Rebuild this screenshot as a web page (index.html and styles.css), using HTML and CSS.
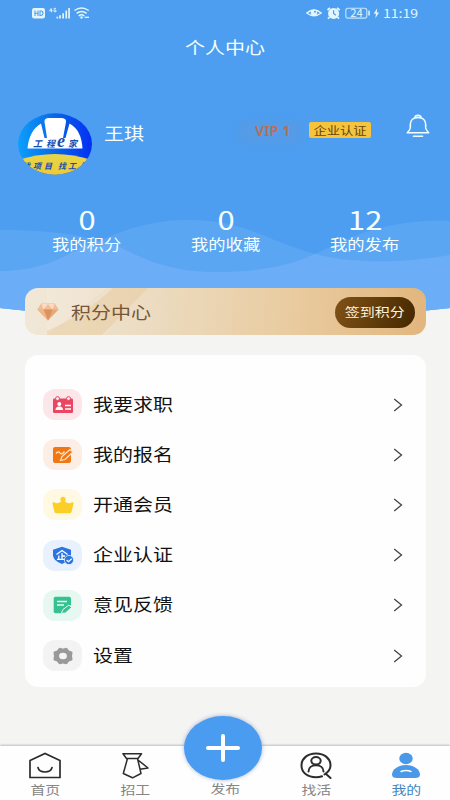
FILE: index.html
```html
<!DOCTYPE html>
<html lang="zh-CN">
<head>
<meta charset="utf-8">
<title>个人中心</title>
<link rel="stylesheet" href="styles.css">
</head>
<body>
<div class="app">
  <svg class="waves" viewBox="0 0 450 320" width="450" height="320">
    <defs><clipPath id="hero"><path d="M0 0H450V308Q225 334 0 308Z"/></clipPath></defs>
    <g clip-path="url(#hero)">
      <rect width="450" height="320" fill="#4d9ef1"/>
      <path d="M0 230C35 230 65 232 92 239C130 248 155 272 215 272C290 272 315 253 345 240C375 226 415 219 450 221V320H0Z" fill="#6aaff5" fill-opacity=".45"/>
      <path d="M0 271C40 271 65 256 92 244C120 231 150 220 188 220C245 220 265 240 315 254C350 263 400 264 450 255V320H0Z" fill="#6aaff5" fill-opacity=".45"/>
      <path d="M0 271C40 271 60 259 78 249Q98 237 118 246C145 260 170 272 215 272C265 272 295 264 315 254C350 263 400 264 450 255V320H0Z" fill="#6eaef6" fill-opacity=".8"/>
    </g>
  </svg>

  <header class="status">
    <div class="status-left">
      <svg width="59" height="14" viewBox="0 0 59 14" fill="#e5f6fb">
        <rect x="0" y="2" width="13" height="10.5" rx="2.2"/>
        <path d="M3 4.5V10M6 4.5V10M3 7.2H6M8 5V9.5H9Q11 9.3 11 7.2T9 5Z" fill="none" stroke="#4d9ef1" stroke-width="1.1"/>
        <path d="M19.5 2 17.4 4.8H20.5M19.6 3V6.3M24 2.4H22.1V5.7H24V4.2H23" fill="none" stroke="#e5f6fb" stroke-width=".9"/>
        <path d="M24.5 10.7h1.7v1.8h-1.7zM27.2 9.3h1.7v3.2h-1.7zM30.3 7.2H32v5.3h-1.7zM33.4 4.6h1.7v7.9h-1.7zM36.2 2h1.7v10.5h-1.7z"/>
        <path d="M42.5 4.5Q49.5-.4 56.7 4.5M44.6 7.4Q49.5 3.6 54.6 7.4M46.7 10Q49.5 7.6 52.3 10" fill="none" stroke="#e5f6fb" stroke-width="1.5"/>
        <circle cx="49.5" cy="11.5" r="1.2"/><path d="M52.5 11.3h4.5" stroke="#e5f6fb" stroke-width="1.3"/>
      </svg>
    </div>
    <div class="status-right">
      <svg width="74" height="14" viewBox="0 0 74 14" fill="#e5f6fb">
        <path d="M.8 7Q8 .8 15.2 7Q8 12.4.8 7Z" fill="none" stroke="#e5f6fb" stroke-width="1.4"/>
        <circle cx="8" cy="6.8" r="3.2"/><circle cx="9" cy="5.7" r="1" fill="#4d9ef1"/>
        <circle cx="27.6" cy="7.4" r="5.5"/><path d="M21.5 4 24 2M31 2l2.7 2M23.7 11.2l-1.8 1.5M31.3 11.2l1.8 1.5" stroke="#e5f6fb" stroke-width="1.7"/>
        <path d="M27.6 4.2V7.4L30 9.2" fill="none" stroke="#4d9ef1" stroke-width="1.2"/>
        <rect x="39.8" y="2.2" width="21" height="9.9" rx="2.2" fill="none" stroke="#c5e6fa" stroke-width="1.1"/>
        <rect x="62.3" y="4.5" width="1.5" height="5" rx=".5"/>
        <path d="M71.2 2.3 67.7 7.8H70L69.3 12.3 73 6.5H70.8Z"/>
        <text x="44.3" y="10.7" font-size="10" textLength="12.5" lengthAdjust="spacingAndGlyphs">24</text>
      </svg>
      <span class="clock"><span class="wide-left">11:19</span></span>
    </div>
  </header>

  <h1 class="title"><span class="wide">个人中心</span></h1>

  <section class="profile">
    <svg class="avatar" viewBox="0 0 74 62" width="74" height="62">
      <defs>
        <linearGradient id="av"><stop offset="0" stop-color="#0ba0fb"/><stop offset=".5" stop-color="#0966e8"/><stop offset="1" stop-color="#0330f3"/></linearGradient>
        <linearGradient id="sand" x2="0" y2="1"><stop stop-color="#e6d64a"/><stop offset="1" stop-color="#f1c934"/></linearGradient>
        <clipPath id="face"><ellipse cx="37" cy="31" rx="37" ry="30.7"/></clipPath>
      </defs>
      <g clip-path="url(#face)">
        <rect width="74" height="62" fill="url(#av)"/>
        <path d="M0 47Q37 35 74 47V62H0Z" fill="url(#sand)"/>
        <path d="M9.5 35.5C10.5 24 15 15 23 10.5L26.5 25H29L26.5 9Q26 5.5 30 5H44Q48.5 5.5 48 9L45 25H47.5L51.5 10.5C60 15 64 24 64.5 35.5Z" fill="#fff"/>
        <g fill="#174cb0" font-weight="bold" font-style="italic">
          <text x="15" y="33.5" font-size="9">工</text><text x="28" y="33.5" font-size="9">程</text>
          <text x="39" y="34" font-size="18" font-family="Liberation Serif, serif">e</text><text x="50" y="33.5" font-size="9">家</text>
          <text x="4" y="55.5" font-size="8">找</text><text x="15" y="55.5" font-size="8">项</text><text x="26" y="55.5" font-size="8">目</text>
          <text x="40" y="55.5" font-size="8">找</text><text x="50" y="55.5" font-size="8">工</text><text x="60" y="55.5" font-size="8">人</text>
        </g>
      </g>
    </svg>
    <div class="name"><span class="wide-left">王琪</span></div>
    <div class="vip"><span class="vip-text">VIP 1</span></div>
    <div class="cert"><span class="wide">企业认证</span></div>
    <svg class="bell" width="24" height="25" viewBox="0 0 24 25" fill="none" stroke="#f3ffff" stroke-width="1.6" stroke-linecap="round" stroke-linejoin="round">
      <path d="M9 3.3Q9.2 1.3 12 1.3T15 3.3M4.3 14V10.5C4.3 6 7.5 3.4 12 3.4S19.7 6 19.7 10.5V13M4.3 14Q4 16 1.3 18.8H22.7Q20 16 19.7 14M7.5 22.3H16.5"/>
    </svg>
  </section>

  <section class="stats">
    <div class="stat"><b><span class="wide">0</span></b><span class="wide">我的积分</span></div>
    <div class="stat"><b><span class="wide">0</span></b><span class="wide">我的收藏</span></div>
    <div class="stat"><b><span class="wide">12</span></b><span class="wide">我的发布</span></div>
  </section>

  <section class="points">
    <svg class="shine" viewBox="0 0 401 47" width="401" height="47">
      <path d="M22 0H82L22 47Z" fill="#fff" opacity=".13"/>
      <path d="M88 0H123L77 47H22V43Q62 25 88 0Z" fill="#e4bd82" opacity=".3"/>
    </svg>
    <svg class="gem" width="22" height="18" viewBox="0 0 22 18">
      <path d="M4.500.5H17.500L21.500 6.500 11 17.500.5 6.500Z" fill="#e7a878"/>
      <path d="M4.500.5H17.500L21.500 6.500H.5Z" fill="#f1bd98"/><path d="M4.500.5 6.500 6.500 11 1 15.500 6.500 17.500.5Z" fill="#fbdcc4"/>
      <path d="M6.500 6.500H15.500L11 17.500Z" fill="#dc925d"/><path d="M.5 6.500H6.500L11 17.500Z" fill="#efb58b"/>
    </svg>
    <div class="points-name"><span class="wide-left">积分中心</span></div>
    <div class="sign"><span class="wide">签到积分</span></div>
  </section>

  <main class="menu">
    <div class="row">
      <div class="tile red"><svg width="22" height="18" viewBox="0 0 22 18"><rect x="1" y="2.5" width="20" height="14.5" rx="1.2" fill="#ec4561"/><g fill="#fce6ea" stroke="#ec4561"><circle cx="5.5" cy="2.6" r="2"/><circle cx="16.5" cy="2.6" r="2"/></g><circle cx="7.3" cy="8" r="2" fill="#fff"/><path d="M3.5 14Q3.5 11.2 6.3 10.6H8.3Q11 11.2 11 14Z" fill="#fff"/><path d="M13 9.5H19M13 13H19" stroke="#fff" stroke-width="1.3"/></svg></div>
      <div class="label"><span class="wide-left">我要求职</span></div><svg class="arrow" width="10" height="16" viewBox="0 0 10 16"><path d="M1.2 2 8.5 8 1.2 14"/></svg>
    </div>
    <div class="row">
      <div class="tile orange"><svg width="22" height="18" viewBox="0 0 22 18"><rect x="1" y="1" width="18" height="16" rx="2" fill="#f17614"/><path d="M4 7.5Q6.5 4.5 8 7T12.5 5.5" fill="none" stroke="#ffe7cf" stroke-width="1.3"/><path d="M8.5 14.5 10 10.5 18 3.5 21 6 13 13.5Z" fill="#f17614" stroke="#ffe7cf" stroke-width="1.2"/></svg></div>
      <div class="label"><span class="wide-left">我的报名</span></div><svg class="arrow" width="10" height="16" viewBox="0 0 10 16"><path d="M1.2 2 8.5 8 1.2 14"/></svg>
    </div>
    <div class="row">
      <div class="tile yellow"><svg width="22" height="18" viewBox="0 0 22 18" fill="#fbcf27"><circle cx="11" cy="3.3" r="2.6"/><path d="M2 6.3Q5 8 7.500 6.500Q9.500 5.500 10 4H12Q12.500 5.500 14.500 6.500Q17 8 20 6.300Q22 6 21.500 7.500L19.500 16Q19 17.300 17.500 17.300H4.500Q3 17.300 2.500 16L.5 7.500Q0 6 2 6.300Z"/></svg></div>
      <div class="label"><span class="wide-left">开通会员</span></div><svg class="arrow" width="10" height="16" viewBox="0 0 10 16"><path d="M1.2 2 8.5 8 1.2 14"/></svg>
    </div>
    <div class="row">
      <div class="tile blue"><svg width="22" height="19" viewBox="0 0 22 19"><path d="M10 .7 19 3.700V9.500Q18 15 10 18Q1.500 15 1 9.500V3.700Z" fill="#2c74df"/><path d="M4.500 8.500 10 4.500 15.500 8.500M10 7V13M6.800 9.500V13M10 10H13M5 13.300H15" fill="none" stroke="#fff" stroke-width="1.3"/><circle cx="17" cy="14" r="4.6" fill="#2c74df" stroke="#e8f1fd" stroke-width=".8"/><path d="M14.600 14 16.500 15.700 19.700 12.700" fill="none" stroke="#fff" stroke-width="1.2"/></svg></div>
      <div class="label"><span class="wide-left">企业认证</span></div><svg class="arrow" width="10" height="16" viewBox="0 0 10 16"><path d="M1.2 2 8.5 8 1.2 14"/></svg>
    </div>
    <div class="row">
      <div class="tile green"><svg width="22" height="18" viewBox="0 0 22 18"><path d="M3.500.7H17Q19 .7 19 2.700V9L10 17.300H3.500Q1.700 17.300 1.700 15.500V2.500Q1.700.7 3.500.7Z" fill="#34c291"/><path d="M5 5.500H15M5 9H12" stroke="#e8faf3" stroke-width="1.3"/><path d="M9.300 17.300 11 13.500 17 9 19.500 11.500 13.500 17Z" fill="#34c291" stroke="#e8faf3"/></svg></div>
      <div class="label"><span class="wide-left">意见反馈</span></div><svg class="arrow" width="10" height="16" viewBox="0 0 10 16"><path d="M1.2 2 8.5 8 1.2 14"/></svg>
    </div>
    <div class="row">
      <div class="tile gray"><svg width="22" height="18" viewBox="0 0 22 18"><path d="M6.500 1.500Q8 .2 9 1Q11 2 13 1Q14 .2 15.500 1.500Q16.500 4 19 4.200Q20.800 4.500 20.500 6Q19.500 9 20.500 12Q20.800 13.500 19 13.800Q16.500 14 15.500 16.500Q14 17.800 13 17Q11 16 9 17Q8 17.800 6.500 16.500Q5.500 14 3 13.800Q1.200 13.500 1.500 12Q2.500 9 1.500 6Q1.200 4.500 3 4.200Q5.500 4 6.500 1.500Z" fill="#999"/><ellipse cx="11" cy="9" rx="3.9" ry="3.3" fill="#f4f4f4"/></svg></div>
      <div class="label"><span class="wide-left">设置</span></div><svg class="arrow" width="10" height="16" viewBox="0 0 10 16"><path d="M1.2 2 8.5 8 1.2 14"/></svg>
    </div>
  </main>

  <nav class="tabs">
    <div class="tab"><svg width="34" height="28" viewBox="0 0 34 28" fill="none" stroke="#2c2c2c" stroke-width="1.7"><path d="M2 25.500V8.500L17 1.500 32 8.500V25.500Z"/><path d="M10 15.500Q11 20 17 20T24 15.500" stroke-linecap="round"/></svg><span class="wide">首页</span></div>
    <div class="tab"><svg width="34" height="28" viewBox="0 0 34 28" fill="none" stroke="#2c2c2c" stroke-width="1.5" stroke-linejoin="round"><path d="M5 1.700H23.500L20 6.500H8.500ZM9.500 6.500 5.300 21.500 14.500 25.800 23 21.500 19.500 6.500M20 8 30 16 22 17.200"/></svg><span class="wide">招工</span></div>
    <div class="tab publish"><div class="fab"><svg width="34" height="28" viewBox="0 0 34 28"><path d="M2 14H32M17 2V26" stroke="#fff" stroke-width="4" stroke-linecap="round"/></svg></div><span class="wide">发布</span></div>
    <div class="tab shifted"><svg width="34" height="28" viewBox="0 0 34 28" fill="none" stroke="#2c2c2c" stroke-width="2" stroke-linecap="round"><path d="M25.500 22.500Q31.500 18.500 31.500 13.500C31.500 6.500 25.500 1.500 17 1.500S2.500 6.500 2.500 13.500 8.500 25.300 17 25.300Q20.500 25.300 23 24.300M26.500 21.500 31.500 26"/><ellipse cx="17" cy="8.8" rx="4.7" ry="3.7"/><path d="M9.500 19.500C9.500 11 24.500 11 24.500 19.500"/></svg><span class="wide">找活</span></div>
    <div class="tab shifted active"><svg width="34" height="28" viewBox="0 0 34 28" fill="#4a98e8"><ellipse cx="17" cy="6.5" rx="6.7" ry="5.8"/><path d="M17 13C25 13 31 17.500 31 22.500Q31 26 26 26H8Q3 26 3 22.500C3 17.500 9 13 17 13Z"/><path d="M12 19.500Q17 17.500 22 19.500" stroke="#fff" stroke-width="1.5" fill="none" stroke-linecap="round"/></svg><span class="wide">我的</span></div>
  </nav>
</div>
</body>
</html>
```
FILE: styles.css
```css
* { box-sizing: border-box; }
body {
  margin: 0;
  background: #f4f4f3;
  font-family: "Noto Sans CJK SC", sans-serif;
  overflow: hidden;
}
svg { display: block; flex: none; }
.app {
  position: relative;
  width: 450px;
  height: 800px;
  display: flex;
  flex-direction: column;
}
.app > * { position: relative; flex: none; }
.app > .waves { position: absolute; top: 0; left: 0; }

/* Expanded letterforms */
.wide, .wide-left { display: inline-block; white-space: nowrap; transform: scaleX(1.21); }
.wide-left { transform-origin: left center; }

.status {
  height: 26px;
  padding: 0 32px;
  display: flex;
  justify-content: space-between;
  align-items: center;
  color: #e5f6fb;
}
.status-right { display: flex; align-items: center; gap: 3px; }
.clock { font-size: 12px; line-height: 14px; width: 35px; white-space: nowrap; }
.clock .wide-left { transform: scaleX(1.17); }
.title {
  margin: 0;
  height: 44px;
  line-height: 43px;
  text-align: center;
  font-size: 16.5px;
  font-weight: 400;
  color: #f5ffff;
}
.profile {
  height: 104px;
  margin-top: 26px;
  padding: 17px 20px 0 18px;
  display: flex;
  align-items: flex-start;
}
.name { width: 147px; padding-left: 12px; margin-top: 7px; font-size: 16.5px; line-height: 26px; color: #f5ffff; }
.vip {
  width: 54px;
  height: 14px;
  margin: 12px 0 0 4px;
  padding-left: 12px;
  line-height: 14px;
  white-space: nowrap;
  background: rgba(125, 145, 185, 0.2);
  box-shadow: 0 0 7px 4px rgba(125, 145, 185, 0.2);
}
.vip-text {
  display: block;
  width: 32px;
  margin-top: -1px;
  font-family: "Noto Sans", sans-serif;
  font-size: 13.5px;
  font-weight: 600;
  color: #b66f55;
  transform: scaleX(1.08);
  transform-origin: left center;
}
.cert {
  width: 62px;
  height: 16px;
  margin: 9px 0 0 12px;
  border-radius: 2px;
  background: #f5c43d;
  color: #67450d;
  text-align: center;
  font-size: 11px;
  line-height: 16px;
}
.bell { margin: 1px 0 0 auto; }
.stats {
  height: 88px;
  padding: 4px 17px 0;
  display: grid;
  grid-template-columns: repeat(3, 139px);
}
.stat { text-align: center; font-size: 14.3px; line-height: 22px; color: #f5ffff; }
.stat b { display: block; padding-left: 1px; font-size: 25.5px; font-weight: 400; line-height: 30px; }
.stat > .wide { position: relative; top: -1px; }
.points {
  width: 401px;
  height: 47px;
  margin-left: 25px;
  padding: 0 11px 0 12px;
  border-radius: 13px;
  overflow: hidden;
  display: flex;
  align-items: center;
  background: linear-gradient(95deg, #f1e8d8 0%, #ecdcc2 30%, #e9cca1 65%, #e2b67d 100%);
}
.shine { position: absolute; left: 0; top: 0; }
.gem, .points-name, .sign { position: relative; }
.points-name { flex: 1; margin-left: 12px; font-size: 16.5px; color: #765638; }
.sign {
  width: 80px;
  height: 31px;
  margin-top: 2px;
  border-radius: 16px;
  background: linear-gradient(110deg, #805217, #452800);
  color: #fff3dd;
  text-align: center;
  font-size: 12.4px;
  line-height: 30px;
}
.menu {
  width: 401px;
  height: 332px;
  margin: 20px 0 0 25px;
  padding: 24.5px 23px 0 18px;
  border-radius: 13px;
  background: #fefefe;
}
.row { height: 50.2px; display: flex; align-items: center; }
.tile { width: 39px; height: 31px; border-radius: 12px; display: grid; place-items: center; }
.red { background: #fce6ea; }
.orange { background: #fdeee5; }
.yellow { background: #fff9e3; }
.blue { background: #e8f1fd; }
.green { background: #e7f8f2; }
.gray { background: #f3f3f3; }
.label { flex: 1; margin: 0 0 2px 11px; font-size: 16.5px; line-height: 24px; color: #111; }
.arrow { fill: none; stroke: #444; stroke-width: 1.3; }
.tabs {
  height: 54px;
  margin-top: auto;
  display: grid;
  grid-template-columns: repeat(5, 90px);
  background: #fefefe;
  box-shadow: 0 -1px 2px rgba(0, 0, 0, 0.22);
}
.tab {
  display: flex;
  flex-direction: column;
  align-items: center;
  padding-top: 6px;
  color: #858585;
  font-size: 12.3px;
  line-height: 20px;
}
.shifted { padding-left: 2px; }
.active { color: #4285bd; }
.publish { position: relative; justify-content: flex-end; padding: 0 0 1px; }
.fab {
  position: absolute;
  top: -30px;
  left: 4px;
  width: 78px;
  height: 64px;
  border-radius: 50%;
  display: grid;
  place-items: center;
  background: #4a9cf0;
  box-shadow: 0 0 4px rgba(60, 90, 160, 0.45);
}
```
